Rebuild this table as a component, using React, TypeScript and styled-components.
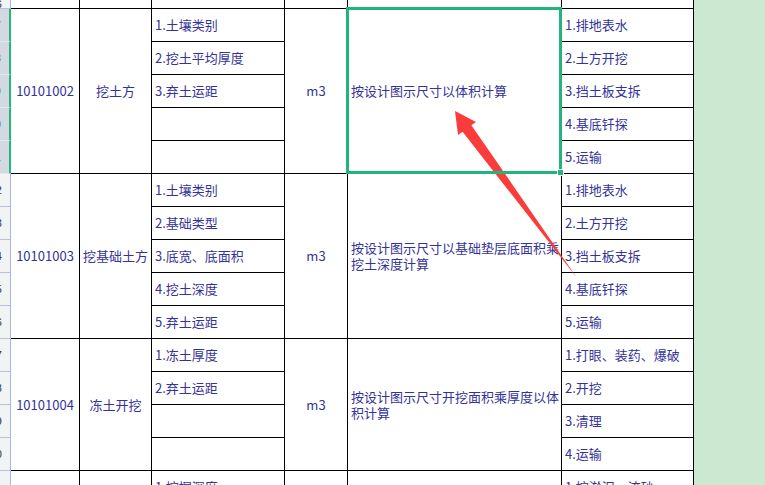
import React from 'react';
import styled, { createGlobalStyle } from 'styled-components';

const GlobalStyle = createGlobalStyle`
  html, body { margin: 0; padding: 0; background: #cde8d0; overflow: hidden; }
  body { font-family: "Noto Sans CJK SC", "Noto Sans", sans-serif; }
`;

const Page = styled.div`
  position: relative;
  width: 765px;
  height: 485px;
  overflow: hidden;
  display: flex;
  align-items: flex-start;
  background: #cde8d0;
`;

const Sheet = styled.div`
  display: grid;
  grid-template-columns: 11px 69px 72px 133px 63px 214px 132px;
  grid-template-rows: 9px repeat(15, 33px);
  background: #fff;
  font-size: 13px;
  line-height: 16px;
  color: #333399;
`;

const Cell = styled.div<{ $row: number; $span?: number }>`
  grid-row: ${p => p.$row} / span ${p => p.$span ?? 1};
  box-sizing: border-box;
  border-right: 1px solid #000;
  border-bottom: 1px solid #000;
  display: flex;
  align-items: center;
  white-space: nowrap;
  min-width: 0;
`;

const CodeCell = styled(Cell)`
  grid-column: 2;
  justify-content: center;
`;

const NameCell = styled(Cell)`
  grid-column: 3;
  justify-content: center;
`;

const ItemCell = styled(Cell)`
  grid-column: 4;
  padding-left: 3px;
`;

const UnitCell = styled(Cell)`
  grid-column: 5;
  justify-content: center;
`;

const DescCell = styled(Cell)<{ $selected?: boolean }>`
  grid-column: 6;
  padding-left: 3px;
  position: relative;
  z-index: ${p => (p.$selected ? 2 : 0)};
`;

const WorkCell = styled(Cell)`
  grid-column: 7;
  padding-left: 3px;
`;

const DescText = styled.div`
  display: flex;
  flex-direction: column;
`;

const DescLine = styled.span`
  display: block;
  height: 16px;
  line-height: 16px;
`;

const RowHead = styled.div<{ $row: number; $selected?: boolean }>`
  grid-column: 1;
  grid-row: ${p => p.$row};
  box-sizing: border-box;
  background: ${p => (p.$selected ? '#d4d8e0' : '#f2f3f5')};
  border-right: ${p => (p.$selected ? '2px solid #20b87c' : '1px solid #a9b5d3')};
  border-bottom: 1px solid ${p => (p.$selected ? '#e3e6ec' : '#b6c0da')};
  overflow: hidden;
  display: flex;
  align-items: center;
  justify-content: flex-end;
  font-family: "Liberation Sans", sans-serif;
  font-size: 11px;
  color: ${p => (p.$selected ? '#1a9a66' : '#333')};
`;

const RowNum = styled.span`
  margin-right: 8px;
  white-space: nowrap;
`;

const SelectionFrame = styled.div`
  position: absolute;
  top: -2px;
  left: -2px;
  right: -1px;
  bottom: -1px;
  border: 3px solid #21b57b;
  pointer-events: none;
`;

const FillHandle = styled.div`
  position: absolute;
  right: -3px;
  bottom: -3px;
  width: 5px;
  height: 5px;
  background: #21b57b;
  border: 1px solid #fff;
`;

const GreenPane = styled.div`
  flex: 1;
  align-self: stretch;
  background: #cde8d0;
`;

const ArrowLayer = styled.svg`
  position: absolute;
  left: 0;
  top: 0;
  pointer-events: none;
`;

type Group = {
  code: string;
  name: string;
  unit: string;
  desc: string[];
  items: string[];
  works: string[];
  selected?: boolean;
};

const groups: Group[] = [
  {
    code: '10101002',
    name: '挖土方',
    unit: 'm3',
    desc: ['按设计图示尺寸以体积计算'],
    items: ['1.土壤类别', '2.挖土平均厚度', '3.弃土运距', '', ''],
    works: ['1.排地表水', '2.土方开挖', '3.挡土板支拆', '4.基底钎探', '5.运输'],
    selected: true,
  },
  {
    code: '10101003',
    name: '挖基础土方',
    unit: 'm3',
    desc: ['按设计图示尺寸以基础垫层底面积乘', '挖土深度计算'],
    items: ['1.土壤类别', '2.基础类型', '3.底宽、底面积', '4.挖土深度', '5.弃土运距'],
    works: ['1.排地表水', '2.土方开挖', '3.挡土板支拆', '4.基底钎探', '5.运输'],
  },
  {
    code: '10101004',
    name: '冻土开挖',
    unit: 'm3',
    desc: ['按设计图示尺寸开挖面积乘厚度以体', '积计算'],
    items: ['1.冻土厚度', '2.弃土运距', '', ''],
    works: ['1.打眼、装药、爆破', '2.开挖', '3.清理', '4.运输'],
  },
  {
    code: '',
    name: '',
    unit: '',
    desc: [],
    items: ['1.挖掘深度'],
    works: ['1.挖淤泥、流砂'],
  },
];

export default function App() {
  const cells: React.ReactNode[] = [];
  let rowNumber = 17;

  cells.push(
    <RowHead key="h-top" $row={1}>
      <RowNum>{rowNumber - 1}</RowNum>
    </RowHead>,
    <CodeCell key="c-top" $row={1} />,
    <NameCell key="n-top" $row={1} />,
    <ItemCell key="i-top" $row={1} />,
    <UnitCell key="u-top" $row={1} />,
    <DescCell key="d-top" $row={1} />,
    <WorkCell key="w-top" $row={1} />
  );

  let row = 2;
  groups.forEach((g, gi) => {
    const span = g.items.length;
    cells.push(
      <CodeCell key={`c${gi}`} $row={row} $span={span}>{g.code}</CodeCell>,
      <NameCell key={`n${gi}`} $row={row} $span={span}>{g.name}</NameCell>,
      <UnitCell key={`u${gi}`} $row={row} $span={span}>{g.unit}</UnitCell>,
      <DescCell key={`d${gi}`} $row={row} $span={span} $selected={g.selected}>
        <DescText>
          {g.desc.map((line, li) => (
            <DescLine key={li}>{line}</DescLine>
          ))}
        </DescText>
        {g.selected && (
          <>
            <SelectionFrame />
            <FillHandle />
          </>
        )}
      </DescCell>
    );
    g.items.forEach((item, ii) => {
      const r = row + ii;
      cells.push(
        <RowHead key={`h${gi}-${ii}`} $row={r} $selected={g.selected}>
          <RowNum>{rowNumber++}</RowNum>
        </RowHead>,
        <ItemCell key={`i${gi}-${ii}`} $row={r}>{item}</ItemCell>,
        <WorkCell key={`w${gi}-${ii}`} $row={r}>{g.works[ii] ?? ''}</WorkCell>
      );
    });
    row += span;
  });

  return (
    <>
      <GlobalStyle />
      <Page>
        <Sheet>{cells}</Sheet>
        <GreenPane />
        <ArrowLayer width={765} height={485} viewBox="0 0 765 485">
          <polygon
            points="455,111 476,122 471.4,125.2 577,278 462.6,131.8 458,135"
            fill="#fb3c3c"
          />
        </ArrowLayer>
      </Page>
    </>
  );
}
